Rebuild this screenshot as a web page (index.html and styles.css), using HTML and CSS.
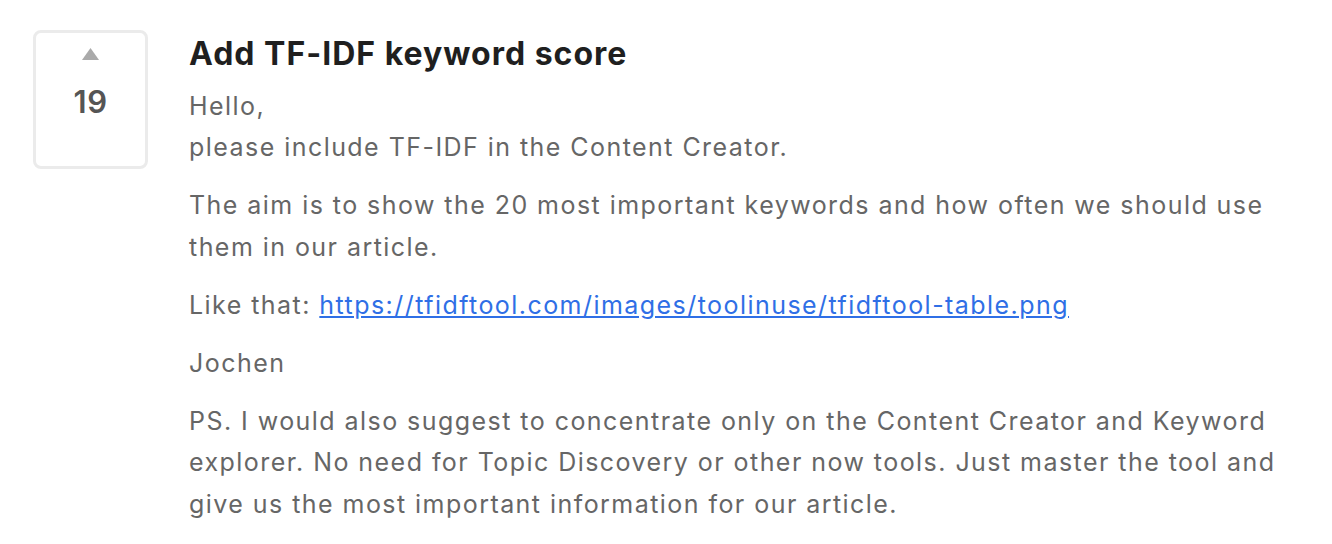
FILE: index.html
```html
<!DOCTYPE html>
<html>
<head>
<meta charset="utf-8">
<link rel="stylesheet" href="styles.css">
</head>
<body>
<div class="post">
  <div class="vote">
    <svg class="arrow" width="17" height="12" viewBox="0 0 17 12"><polygon points="8.5,0 17,12 0,12" fill="#aaaaaa"/></svg>
    <div class="count">19</div>
  </div>
  <div class="content">
    <h1 class="title">Add TF-IDF keyword score</h1>
    <div class="body">
      <p>Hello,<br>please include TF-IDF in the Content Creator.</p>
      <p>The aim is to show the 20 most important keywords and how often we should use them in our article.</p>
      <p>Like that: <a href="#">https://tfidftool.com/images/toolinuse/tfidftool-table.png</a></p>
      <p>Jochen</p>
      <p>PS. I would also suggest to concentrate only on the Content Creator and Keyword explorer. No need for Topic Discovery or other now tools. Just master the tool and give us the most important information for our article.</p>
    </div>
  </div>
</div>
</body>
</html>
```
FILE: styles.css
```css
html, body {
  margin: 0;
  padding: 0;
  background: #ffffff;
}
body {
  font-family: Inter, "Noto Sans", sans-serif;
}
.post {
  display: flex;
  align-items: flex-start;
  gap: 41px;
  padding: 30px 42px 0 33px;
}
.vote {
  flex: none;
  box-sizing: border-box;
  width: 115px;
  height: 139px;
  border: 3px solid #ebebeb;
  border-radius: 8px;
  display: flex;
  flex-direction: column;
  align-items: center;
  padding-top: 15px;
}
.arrow {
  display: block;
}
.count {
  margin-top: 25px;
  font-size: 31px;
  font-weight: 600;
  color: #555555;
  line-height: 34px;
  letter-spacing: 0.5px;
}
.content {
  flex: 1;
  min-width: 0;
}
.title {
  margin: 2px 0 0;
  font-size: 32px;
  font-weight: 700;
  color: #1f1f1f;
  line-height: 44px;
  letter-spacing: 1px;
}
.body {
  margin-top: 9.5px;
  font-size: 25px;
  line-height: 41.5px;
  letter-spacing: 1.45px;
  color: #666666;
}
.body p {
  margin: 0 0 16.5px;
}
.body a {
  color: #2f6fe6;
  text-decoration: underline;
}
```
